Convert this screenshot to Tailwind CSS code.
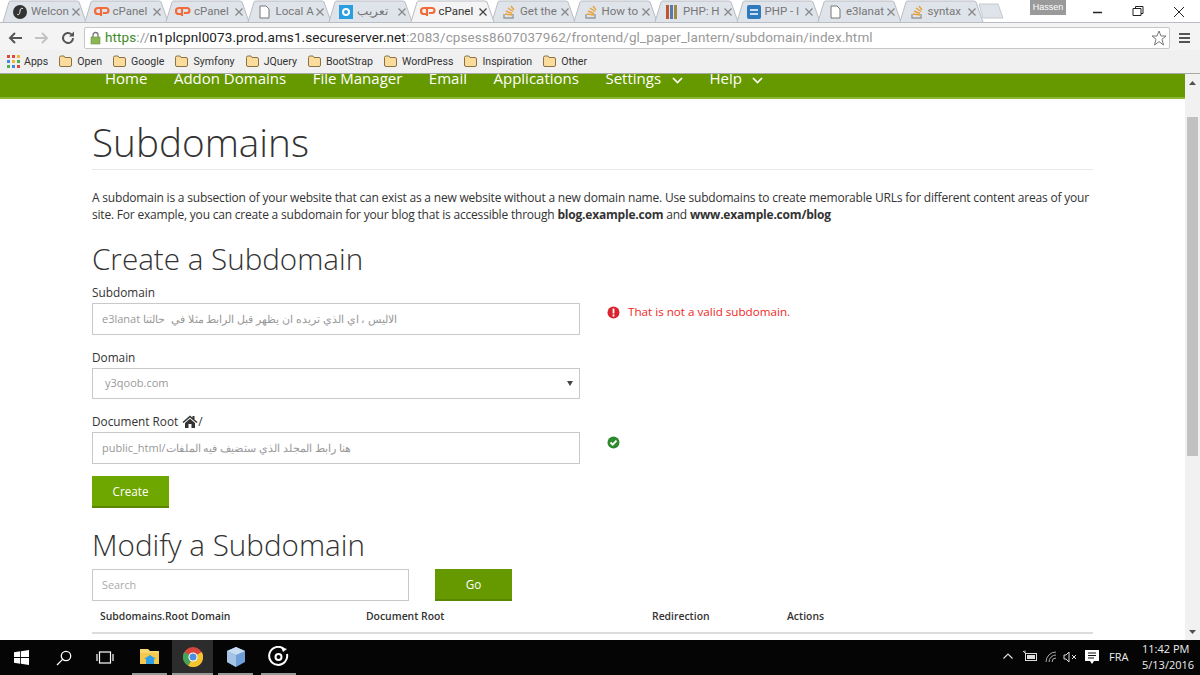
<!DOCTYPE html>
<html lang="en">
<head>
    <meta charset="UTF-8">
    <title>Subdomains</title>
    <script src="https://cdn.jsdelivr.net/npm/@tailwindcss/browser@4"></script>
</head>
<body class="w-[1200px] h-[675px] overflow-hidden flex flex-col bg-white font-['Open_Sans','Noto_Sans',sans-serif] text-[#333]">
    <!-- Tab strip -->
    <div class="h-[22px] shrink-0 bg-white flex relative pl-[2px]">
        <div id="tabs" class="flex"></div>
        <svg class="mt-[3px] -ml-[2px]" width="26" height="16" viewBox="0 0 26 16"><path d="M1 1H20L25 15H5Z" fill="#dfe3ea" stroke="#c4c8cf"/></svg>
        <div class="absolute left-[1030px] top-0 w-[36px] h-[15px] bg-[#9a9a9a] text-white text-[9px] leading-[14px] text-center font-['Liberation_Sans',sans-serif]">Hassen</div>
        <svg class="absolute left-[1092px] top-[5px]" width="100" height="14" viewBox="0 0 100 14" fill="none" stroke="#222">
            <path d="M1 7.5H10" stroke-width="1.5"/>
            <path d="M41 3.5H49V10.5H41Z M43.5 3.5V1.5H51V8.5H49" stroke-width="1"/>
            <path d="M82 2L92 12M92 2L82 12" stroke-width="1"/>
        </svg>
    </div>

    <!-- Toolbar -->
    <div class="h-[28px] shrink-0 pt-[2px] bg-[#f4f4f4] border-t border-[#b9bcc2] flex items-center">
        <svg class="ml-[8px]" width="14" height="12" viewBox="0 0 14 12" fill="none" stroke="#555" stroke-width="2"><path d="M14 6H2M7 1L2 6L7 11"/></svg>
        <svg class="ml-[13px]" width="14" height="12" viewBox="0 0 14 12" fill="none" stroke="#c2c2c2" stroke-width="2"><path d="M0 6H12M7 1L12 6L7 11"/></svg>
        <svg class="ml-[12px]" width="14" height="14" viewBox="0 0 14 14" fill="none" stroke="#555" stroke-width="2"><path d="M12 7A5 5 0 1 1 10.5 3.4"/><path d="M13 0.5V5.5H8Z" fill="#555" stroke="none"/></svg>
        <div class="ml-[9px] w-[1086px] h-[22px] bg-white border border-[#c6c6c6] rounded-[2px] flex items-center pl-[5px] text-[13.5px] whitespace-nowrap">
            <svg width="11" height="14" viewBox="0 0 11 14"><path d="M3 6V4A2.5 2.5 0 0 1 8 4V6" fill="none" stroke="#777" stroke-width="1.3"/><rect x="1" y="6" width="9" height="7" fill="#8cb555" stroke="#6d9440" stroke-width=".6"/></svg>
            <span class="ml-[4px] font-['Roboto',sans-serif] tracking-[0.1px] text-[#999]"><span class="text-[#3e8a28]">https</span>://<span class="text-[#222]">n1plcpnl0073.prod.ams1.secureserver.net</span>:2083/cpsess8607037962/frontend/gl_paper_lantern/subdomain/index.html</span>
            <svg class="ml-auto mr-[2px]" width="16" height="16" viewBox="0 0 16 16" fill="#fff" stroke="#777"><path d="M8 1L10 6H15L11 9.3L12.5 15L8 11.6L3.5 15L5 9.3L1 6H6Z"/></svg>
        </div>
        <div class="ml-[9px] flex flex-col gap-[2px]">
            <div class="w-[11px] h-[2px] bg-[#555]"></div>
            <div class="w-[11px] h-[2px] bg-[#555]"></div>
            <div class="w-[11px] h-[2px] bg-[#555]"></div>
        </div>
    </div>

    <!-- Bookmarks bar -->
    <div class="h-[24px] shrink-0 bg-[#f0f0f0] border-b border-[#a8a8a8] flex items-center pl-[7px] text-[10.6px] text-[#333] font-['Roboto',sans-serif]">
        <svg width="13" height="13" viewBox="0 0 13 13">
            <rect x="0" y="0" width="3" height="3" fill="#e0483a"/><rect x="5" y="0" width="3" height="3" fill="#e0483a"/><rect x="10" y="0" width="3" height="3" fill="#f2b632"/>
            <rect x="0" y="5" width="3" height="3" fill="#3f8ae0"/><rect x="5" y="5" width="3" height="3" fill="#f2b632"/><rect x="10" y="5" width="3" height="3" fill="#4caf50"/>
            <rect x="0" y="10" width="3" height="3" fill="#4caf50"/><rect x="5" y="10" width="3" height="3" fill="#3f8ae0"/><rect x="10" y="10" width="3" height="3" fill="#e0483a"/>
        </svg>
        <span class="ml-[4px] mr-[11px]">Apps</span>
        <div id="bookmarks" class="flex gap-[11px]"></div>
    </div>

    <!-- Page -->
    <div class="flex-1 min-h-0 flex">
        <div class="flex-1 min-w-0 overflow-hidden">
            <nav class="h-[25px] bg-[#669900] border-b-2 border-[#8ab82e] text-white text-[15px] leading-[8px] flex pl-[105px] gap-[26.500px] overflow-hidden">
                <span>Home</span><span>Addon Domains</span><span>File Manager</span><span>Email</span><span>Applications</span>
                <span class="flex gap-[11px]">Settings <svg class="mt-[3px]" width="11" height="7" viewBox="0 0 11 7" fill="none" stroke="#fff" stroke-width="1.6"><path d="M1 1L5.5 5.5L10 1"/></svg></span>
                <span class="flex gap-[10px]">Help <svg class="mt-[3px]" width="11" height="7" viewBox="0 0 11 7" fill="none" stroke="#fff" stroke-width="1.6"><path d="M1 1L5.5 5.5L10 1"/></svg></span>
            </nav>

            <main class="pl-[92px] w-[1093px]">
                <h1 class="mt-[18px] h-[53px] border-b border-[#e8e8e8] text-[38.700px] leading-[50px] font-light text-[#333]">Subdomains</h1>
                <p class="mt-[19px] text-[12px] tracking-[-0.2px] leading-[17px] text-[#333]">A subdomain is a subsection of your website that can exist as a new website without a new domain name. Use subdomains to create memorable URLs for different content areas of your site. For example, you can create a subdomain for your blog that is accessible through <b>blog.example.com</b> and <b>www.example.com/blog</b></p>

                <h2 class="mt-[14px] text-[29.600px] leading-[44px] font-light">Create a Subdomain</h2>

                <label class="block mt-[2px] text-[11.800px] leading-[18px]">Subdomain</label>
                <div class="mt-[2px] flex items-start">
                    <div dir="rtl" class="w-[488px] h-[32px] border border-[#c9c9c9] flex items-center justify-end pl-[9px] text-[11px] text-[#999] whitespace-nowrap">الاليس ، اي الذي تريده ان يظهر قبل الرابط مثلا في&nbsp; حالتنا e3lanat</div>
                    <svg class="ml-[27px] mt-[3px]" width="13" height="13" viewBox="0 0 13 13"><circle cx="6.5" cy="6.5" r="6" fill="#d9232e"/><rect x="5.6" y="2.5" width="1.8" height="5" fill="#fff"/><rect x="5.6" y="8.5" width="1.8" height="2" fill="#fff"/></svg>
                    <span class="ml-[8px] mt-[1px] text-[11.650px] leading-[16px] text-[#f0261d]">That is not a valid subdomain.</span>
                </div>

                <label class="block mt-[13px] text-[11.800px] leading-[18px]">Domain</label>
                <div class="mt-[2px] w-[488px] h-[31px] border border-[#c9c9c9] pl-[12px] pr-[6px] flex items-center justify-between text-[11px] text-[#999]">
                    y3qoob.com
                    <svg width="6" height="5" viewBox="0 0 6 5"><path d="M0 0H6L3 5Z" fill="#444"/></svg>
                </div>

                <label class="flex items-center mt-[13px] text-[11.800px] leading-[18px]">Document Root
                    <svg class="ml-[4px]" width="16" height="13" viewBox="0 0 15 13"><path d="M7.5 0.5L0 7L1 8L7.5 2.5L14 8L15 7L12 4.4V1H10V2.7Z" fill="#333"/><path d="M2.5 8L7.5 3.7L12.5 8V13H9V9H6V13H2.5Z" fill="#333"/></svg>/
                </label>
                <div class="mt-[2px] flex items-start">
                    <div class="w-[488px] h-[32px] border border-[#c9c9c9] pl-[9px] flex items-center text-[11px] text-[#999] whitespace-nowrap">public_html/هنا رابط المجلد الذي ستضيف فيه الملفات</div>
                    <svg class="ml-[27px] mt-[4px]" width="13" height="13" viewBox="0 0 13 13"><circle cx="6.5" cy="6.5" r="6" fill="#2f8a2f"/><path d="M3.5 6.5L5.7 8.7L9.5 4.6" fill="none" stroke="#fff" stroke-width="1.8"/></svg>
                </div>

                <button class="block mt-[12px] w-[77px] h-[32px] pt-[2px] bg-[#6ea700] border-b-2 border-[#5a8600] text-white text-[11.700px]">Create</button>

                <h2 class="mt-[15px] text-[29.600px] leading-[44px] font-light">Modify a Subdomain</h2>

                <div class="mt-[2px] flex">
                    <div class="w-[317px] h-[32px] border border-[#c9c9c9] pl-[9px] flex items-center text-[10.800px] text-[#aaa]">Search</div>
                    <button class="ml-[26px] w-[77px] h-[32px] pt-[1px] bg-[#669900] border-b-2 border-[#5a8600] text-white text-[11.700px]">Go</button>
                </div>

                <div class="h-[33px] border-b-2 border-[#dcdcdc] flex items-center text-[10.400px] font-semibold text-[#333]">
                    <span class="ml-[8px] w-[266px]">Subdomains.Root Domain</span>
                    <span class="w-[286px]">Document Root</span>
                    <span class="w-[135px]">Redirection</span>
                    <span>Actions</span>
                </div>
            </main>
        </div>

        <!-- Scrollbar -->
        <div class="w-[15px] shrink-0 bg-[#f1f1f1] flex flex-col items-center">
            <svg class="mt-[7px]" width="7" height="4" viewBox="0 0 7 4"><path d="M3.5 0L7 4H0Z" fill="#505050"/></svg>
            <div class="mt-[32px] w-[11px] h-[339px] bg-[#c1c1c1]"></div>
            <svg class="mt-auto mb-[6px]" width="7" height="4" viewBox="0 0 7 4"><path d="M0 0H7L3.5 4Z" fill="#505050"/></svg>
        </div>
    </div>

    <!-- Taskbar -->
    <div class="h-[35px] shrink-0 bg-[#050505] flex items-center text-white relative">
        <svg class="ml-[14px]" width="15" height="15" viewBox="0 0 15 15" fill="#fff"><path d="M0 2.2L6.2 1.3V7H0ZM7 1.2L15 0V7H7ZM0 8H6.2V13.7L0 12.8ZM7 8H15V15L7 13.8Z"/></svg>
        <svg class="ml-[27px]" width="16" height="16" viewBox="0 0 16 16" fill="none" stroke="#fff" stroke-width="1.3"><circle cx="10" cy="6" r="4.7"/><path d="M6.6 9.4L1 15"/></svg>
        <svg class="ml-[24px]" width="18" height="13" viewBox="0 0 18 13" fill="none" stroke="#fff" stroke-width="1.2"><rect x="3.5" y="1" width="11" height="11"/><path d="M1 3V10M17 3V10"/></svg>
        <div class="ml-[18px] w-[35px] h-[35px] flex items-center justify-center border-b-2 border-[#999]">
            <svg width="20" height="17" viewBox="0 0 20 17"><path d="M0 1H8L10 3H19V16H0Z" fill="#f7d774"/><rect x="0" y="5" width="19" height="11" fill="#f2c94c"/><path d="M6 16V11H14V16Z M4 11L10 7L16 11Z" fill="#2f9ee8"/></svg>
        </div>
        <div class="ml-[5px] w-[41px] h-[35px] bg-[#2c2c2c] flex items-center justify-center border-b-2 border-[#999]">
            <svg width="20" height="20" viewBox="0 0 20 20"><circle cx="10" cy="10" r="10" fill="#d9453a"/><path d="M10 10L1.3 15A10 10 0 0 1 1.3 5Z" fill="#3fa757"/><path d="M10 10L18.7 5A10 10 0 0 1 5 18.7Z" fill="#f4c430"/><path d="M10 10L5 18.7A10 10 0 0 1 1.3 15Z" fill="#3fa757"/><circle cx="10" cy="10" r="4.6" fill="#fff"/><circle cx="10" cy="10" r="3.5" fill="#4a8fe0"/></svg>
        </div>
        <div class="ml-[5px] w-[35px] h-[35px] flex items-center justify-center border-b-2 border-[#999]">
            <svg width="20" height="22" viewBox="0 0 20 22"><path d="M10 1L19 5V16L10 21L1 16V5Z" fill="#6f9fd8"/><path d="M10 1L19 5L10 9L1 5Z" fill="#c9ddf2"/><path d="M10 9V21L1 16V5Z" fill="#a6c3e6"/></svg>
        </div>
        <div class="ml-[8px] w-[35px] h-[35px] flex items-center justify-center border-b-2 border-[#999]">
            <svg width="21" height="21" viewBox="0 0 21 21" fill="none" stroke="#fff"><path d="M16 3A9 9 0 1 0 19 8" stroke-width="2"/><circle cx="10.500" cy="11" r="3" stroke-width="2"/><path d="M13 1L19 3L15 6Z" fill="#fff" stroke="none"/></svg>
        </div>

        <svg class="absolute left-[1003px] top-[13px]" width="10" height="6" viewBox="0 0 10 6" fill="none" stroke="#ddd" stroke-width="1.2"><path d="M0.500 5.500L5 1L9.500 5.500"/></svg>
        <svg class="absolute left-[1022px] top-[10px]" width="15" height="12" viewBox="0 0 15 12" fill="none" stroke="#ddd"><rect x="3.500" y="3.500" width="11" height="7"/><rect x="5" y="5" width="8" height="4" fill="#ddd" stroke="none"/><path d="M1 1L4 4M3 0.500V3"/></svg>
        <svg class="absolute left-[1045px] top-[11px]" width="13" height="12" viewBox="0 0 13 12" fill="none" stroke="#aaa"><path d="M1 11A10 10 0 0 1 11 1M4 11A7 7 0 0 1 11 4M7 11A4 4 0 0 1 11 7"/></svg>
        <svg class="absolute left-[1063px] top-[11px]" width="14" height="12" viewBox="0 0 14 12" fill="none" stroke="#ddd"><path d="M1 4H3L6 1V11L3 8H1Z"/><path d="M9 4L13 8M13 4L9 8"/></svg>
        <svg class="absolute left-[1085px] top-[10px]" width="14" height="15" viewBox="0 0 14 15"><path d="M0 0H14V11H9L7 14L5 11H0Z" fill="#fff"/><path d="M3 3H11M3 5.500H11M3 8H9" stroke="#111"/></svg>
        <span class="absolute left-[1109px] top-[10px] text-[11px] leading-[14px] text-[#eee]">FRA</span>
        <div class="absolute left-[1142px] w-[46px] top-[1px] text-[11px] leading-[16px] text-center text-[#eee] whitespace-nowrap">
            <div>11:42 PM</div>
            <div>5/13/2016</div>
        </div>
    </div>

    <script>
        // Chrome tabs, left to right
        const so = '<svg width="12" height="14" viewBox="0 0 12 14" fill="none" stroke="#e8a33d" stroke-width="1.4"><path d="M2 9L9 10M3 6L9 8.500M5 3L10 6.500M8 1L11 5"/><path d="M1 9V13H10V9" stroke="#999"/></svg>';
        const cp = '<svg width="16" height="11" viewBox="0 0 16 11" fill="none" stroke="#f26b3a" stroke-width="2.200"><path d="M7 2H4A3 3 0 0 0 4 8H6"/><path d="M7 10V2H12A2.500 2.500 0 0 1 12 7H9"/></svg>';
        const doc = '<svg width="11" height="14" viewBox="0 0 11 14" fill="#fff" stroke="#777"><path d="M1 1H7L10 4V13H1Z"/></svg>';
        const tabs = [
            { icon: '<svg width="14" height="14" viewBox="0 0 14 14"><circle cx="7" cy="7" r="7" fill="#333"/><path d="M4 9C6 11 7 8 7 6S9 2 10 4" fill="none" stroke="#fff"/></svg>', label: 'Welcon' },
            { icon: cp, label: 'cPanel' },
            { icon: cp, label: 'cPanel' },
            { icon: doc, label: 'Local A' },
            { icon: '<svg width="14" height="14" viewBox="0 0 14 14"><rect width="14" height="14" fill="#2a9fe0"/><circle cx="7" cy="7" r="3" fill="none" stroke="#fff" stroke-width="2"/></svg>', label: 'تعريب' },
            { icon: cp, label: 'cPanel', active: true },
            { icon: so, label: 'Get the' },
            { icon: so, label: 'How to' },
            { icon: '<svg width="14" height="14" viewBox="0 0 14 14"><rect x="1" width="3" height="14" fill="#c0562f"/><rect x="5" width="3" height="14" fill="#5579a8"/><rect x="9" width="3" height="14" fill="#a3874a"/></svg>', label: 'PHP: H' },
            { icon: '<svg width="14" height="14" viewBox="0 0 14 14"><rect width="14" height="14" rx="2" fill="#2f79bd"/><path d="M3 5H11M3 9H11" stroke="#fff" stroke-width="1.500"/></svg>', label: 'PHP - I' },
            { icon: doc, label: 'e3lanat' },
            { icon: so, label: 'syntax' }
        ];
        document.getElementById('tabs').innerHTML = tabs.map(t => `
            <div class="relative w-[81.500px] h-[22px] flex items-center pl-[10px] pr-[4px] pt-[1px] text-[11.500px] font-['Roboto',sans-serif] ${t.active ? 'text-[#333] z-10' : 'text-[#777]'}">
                <svg class="absolute left-0 top-0" width="85" height="22" viewBox="0 0 85 22"><path d="M1 22L7 2Q7.500 1 9 1H74Q76 1 77 2L84 22" fill="${t.active ? '#f4f4f4' : '#dfe3ea'}" stroke="#b9bcc2"/></svg>
                <span class="relative shrink-0 w-[16px] flex justify-center">${t.icon}</span>
                <span class="relative ml-[3px] whitespace-nowrap">${t.label}</span>
                <svg class="relative ml-auto" width="8" height="8" viewBox="0 0 8 8" stroke="${t.active ? '#444' : '#888'}" stroke-width="1.300"><path d="M0.500 0.500L7.500 7.500M7.500 0.500L0.500 7.500"/></svg>
            </div>`).join('');

        const folders = ['Open', 'Google', 'Symfony', 'JQuery', 'BootStrap', 'WordPress', 'Inspiration', 'Other'];
        document.getElementById('bookmarks').innerHTML = folders.map(name => `
            <span class="flex items-center gap-[5px]">
                <svg width="13" height="12" viewBox="0 0 13 12"><path d="M0.500 2.500Q0.500 1 2 1H5L6 2.500H11Q12.500 2.500 12.500 4V10Q12.500 11.500 11 11.500H2Q0.500 11.500 0.500 10Z" fill="#fbdc9c" stroke="#8a7342"/></svg>
                ${name}
            </span>`).join('');
    </script>
</body>
</html>
